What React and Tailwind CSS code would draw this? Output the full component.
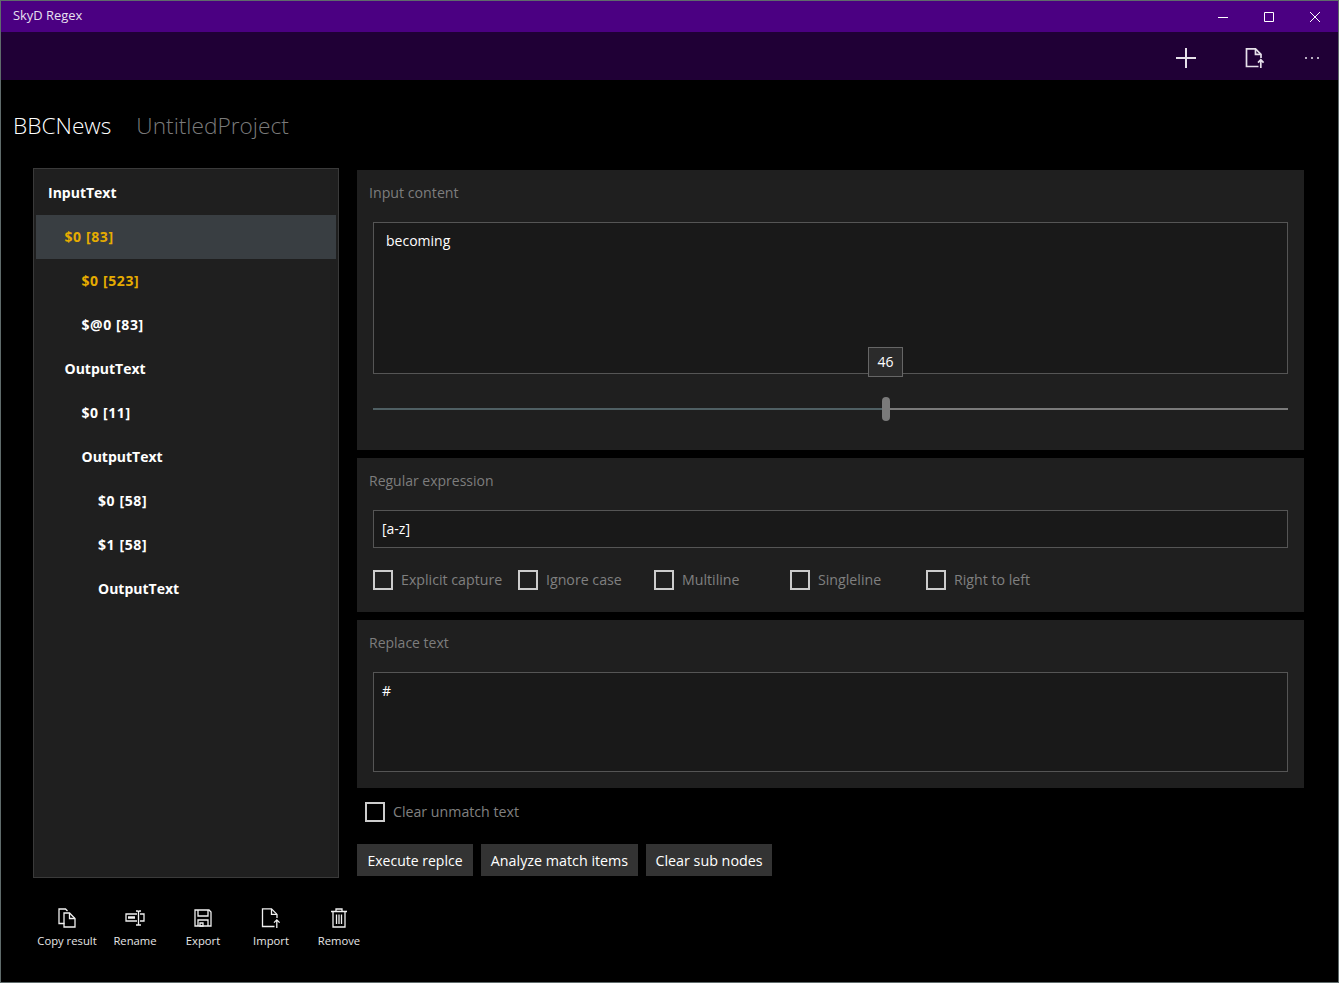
const treeItems = [
  { label: 'InputText', depth: 0 },
  { label: '$0 [83]', depth: 1, active: true, selected: true, numeric: true },
  { label: '$0 [523]', depth: 2, active: true, numeric: true },
  { label: '$@0 [83]', depth: 2, numeric: true },
  { label: 'OutputText', depth: 1 },
  { label: '$0 [11]', depth: 2, numeric: true },
  { label: 'OutputText', depth: 2 },
  { label: '$0 [58]', depth: 3, numeric: true },
  { label: '$1 [58]', depth: 3, numeric: true },
  { label: 'OutputText', depth: 3 },
]

const depthPad = ['pl-3', 'pl-[28.5px]', 'pl-[45.5px]', 'pl-[62px]']

function Check({ label, className = '' }) {
  return (
    <div className={`flex items-center gap-2 ${className}`}>
      <span className="w-5 h-5 border-2 border-[#cccccc] shrink-0" />
      <span className="text-[14.2px] text-[#808080] leading-5 -mt-px">{label}</span>
    </div>
  )
}

function ImportIcon({ className, weight = 1.3 }) {
  return (
    <svg viewBox="0 0 20 20" className={className} fill="none" stroke="currentColor" strokeWidth={weight}>
      <path d="M13.5 18.5H1.5V0.9H10.5L16 6.4V10" />
      <path d="M10.5 0.9V6.4H16" />
      <path d="M15.8 11.5V20M13 14.6L15.8 11.8L18.6 14.6" />
    </svg>
  )
}

function ToolButton({ label, children }) {
  return (
    <div className="w-[68px] flex flex-col items-center">
      <div className="h-5 flex items-center justify-center text-[#f0f0f0]">{children}</div>
      <span className="mt-[5px] text-[11.25px] leading-4 text-[#e6e6e6]">{label}</span>
    </div>
  )
}

export default function App() {
  return (
    <div className="w-[1339px] h-[983px] bg-black border border-[#5f6b6b] flex flex-col overflow-hidden font-['Open_Sans','Noto_Sans',sans-serif] text-white">
      <div className="h-[31px] shrink-0 bg-[#4b0082] flex items-center justify-between">
        <span className="pl-3 -mt-0.5 text-[12.9px] text-[#e8e0f0]">SkyD Regex</span>
        <div className="flex items-center text-white">
          <div className="w-[46px] flex justify-center">
            <svg width="10" height="10" viewBox="0 0 10 10" stroke="currentColor" fill="none"><path d="M0 5.5H10" /></svg>
          </div>
          <div className="w-[46px] flex justify-center">
            <svg width="10" height="10" viewBox="0 0 10 10" stroke="currentColor" fill="none"><path d="M.5.5h9v9h-9z" /></svg>
          </div>
          <div className="w-[46px] flex justify-center">
            <svg width="10" height="10" viewBox="0 0 10 10" stroke="currentColor" fill="none"><path d="M0 0L10 10M10 0L0 10" /></svg>
          </div>
        </div>
      </div>

      <div className="h-12 shrink-0 bg-[#200036] flex items-center justify-end pt-1 text-[#e6e0ea]">
        <div className="w-[68px] flex justify-center">
          <svg width="20" height="20" viewBox="0 0 20 20" stroke="currentColor" strokeWidth="2" fill="none"><path d="M10 0V20M0 10H20" /></svg>
        </div>
        <div className="w-[68px] flex justify-center">
          <ImportIcon className="w-5 h-5 ml-px" weight={1.7} />
        </div>
        <div className="w-[50px] pr-0.5 flex justify-center gap-1">
          <span className="w-0.5 h-0.5 bg-[#b9aec2]" />
          <span className="w-0.5 h-0.5 bg-[#b9aec2]" />
          <span className="w-0.5 h-0.5 bg-[#b9aec2]" />
        </div>
      </div>

      <div className="flex items-center gap-[25px] pl-3 h-[88px] pt-[5px] shrink-0 text-[22.7px] font-light">
        <span className="text-white">BBCNews</span>
        <span className="text-[#7a7a7a]">UntitledProject</span>
      </div>

      <div className="flex pl-8 pr-[34px] gap-[18px]">
        <div className="w-[306px] h-[710px] shrink-0 bg-[#1f1f1f] border border-[#3a3a3a] p-0.5">
          {treeItems.map((item, i) => (
            <div
              key={i}
              className={`h-11 flex items-center text-sm font-bold ${depthPad[item.depth]} ${item.numeric ? 'tracking-[0.6px]' : ''} ${item.selected ? 'bg-[#393e42]' : ''} ${item.active ? 'text-[#e6ac00]' : 'text-white'}`}
            >
              {item.label}
            </div>
          ))}
        </div>

        <div className="flex-1 pt-0.5">
          <section className="h-[280px] bg-[#1f1f1f] px-4">
            <h2 className="-mx-1 pt-3 text-[14.2px] leading-[22px] text-[#7d7d7d]">Input content</h2>
            <div className="mt-[18px] h-[152px] bg-[#191919] border border-[#555555] px-3 py-2 text-sm leading-5">becoming</div>
            <div className="mt-[23px] h-6 relative flex items-center">
              <div className="h-0.5 w-[513px] bg-[#4f5f63]" />
              <div className="h-0.5 flex-1 bg-[#7a7a7a]" />
              <div className="absolute left-[509px] top-0 w-2 h-6 rounded bg-[#7a7a7a]" />
              <div className="absolute left-[495px] -top-[50px] w-[35px] h-[30px] bg-[#2b2b2b] border border-[#666666] flex items-center justify-center text-sm">46</div>
            </div>
          </section>

          <section className="mt-2 h-[154px] bg-[#1f1f1f] px-4">
            <h2 className="-mx-1 pt-3 text-sm leading-[22px] text-[#7d7d7d]">Regular expression</h2>
            <div className="mt-[18px] h-[38px] bg-[#191919] border border-[#555555] px-2 flex items-center text-sm">[a-z]</div>
            <div className="mt-[22px] flex">
              <Check label="Explicit capture" className="w-[145px]" />
              <Check label="Ignore case" className="w-[136px]" />
              <Check label="Multiline" className="w-[136px]" />
              <Check label="Singleline" className="w-[136px]" />
              <Check label="Right to left" />
            </div>
          </section>

          <section className="mt-2 h-[168px] bg-[#1f1f1f] px-4">
            <h2 className="-mx-1 pt-3 text-sm leading-[22px] text-[#7d7d7d]">Replace text</h2>
            <div className="mt-[18px] h-[100px] bg-[#191919] border border-[#555555] px-2 py-2 text-sm leading-5">#</div>
          </section>

          <Check label="Clear unmatch text" className="mt-3.5 ml-2" />

          <div className="mt-[22px] flex gap-2">
            <button className="h-8 w-[116px] pt-0.5 bg-[#333333] text-sm text-white">Execute replce</button>
            <button className="h-8 w-[157px] pt-0.5 bg-[#333333] text-[14.3px] text-white">Analyze match items</button>
            <button className="h-8 w-[126px] pt-0.5 bg-[#333333] text-[14.3px] text-white">Clear sub nodes</button>
          </div>
        </div>
      </div>

      <div className="flex pl-[32px] mt-[30px]">
        <ToolButton label="Copy result">
          <svg width="18" height="20" viewBox="0 0 18 20" fill="none" stroke="currentColor" strokeWidth="1.3">
            <path d="M6.5 15.5H1V1H7.5L9.5 3" />
            <path d="M6 5H11.5L17 10.5V19H6Z" />
            <path d="M11.5 5V10.5H17" />
          </svg>
        </ToolButton>
        <ToolButton label="Rename">
          <svg width="20" height="16" viewBox="0 0 20 16" fill="none" stroke="currentColor" strokeWidth="1.3">
            <path d="M12 4H1V11H12" />
            <path d="M3 7.5H10" strokeWidth="2.5" />
            <path d="M15 4H19V11H15" />
            <path d="M11 1H12.5Q13.5 1 13.5 2V14Q13.5 15 12.5 15H11M16 1H14.5Q13.5 1 13.5 2M13.5 14Q13.5 15 14.5 15H16" />
          </svg>
        </ToolButton>
        <ToolButton label="Export">
          <svg width="18" height="18" viewBox="0 0 18 18" fill="none" stroke="currentColor" strokeWidth="1.3">
            <path d="M1 1H15L17 3V17H1Z" />
            <path d="M4 1V7H14V1" />
            <path d="M4 17V11H14V17" />
            <path d="M6 14H9V17H6Z" />
          </svg>
        </ToolButton>
        <ToolButton label="Import">
          <ImportIcon className="w-5 h-5" />
        </ToolButton>
        <ToolButton label="Remove">
          <svg width="16" height="20" viewBox="0 0 16 20" fill="none" stroke="currentColor" strokeWidth="1.3">
            <path d="M0 3.5H16M5 3.5V1H11V3.5" />
            <path d="M2 3.5V19H14V3.5" />
            <path d="M5.5 6.5V16M8 6.5V16M10.5 6.5V16" />
          </svg>
        </ToolButton>
      </div>
    </div>
  )
}
